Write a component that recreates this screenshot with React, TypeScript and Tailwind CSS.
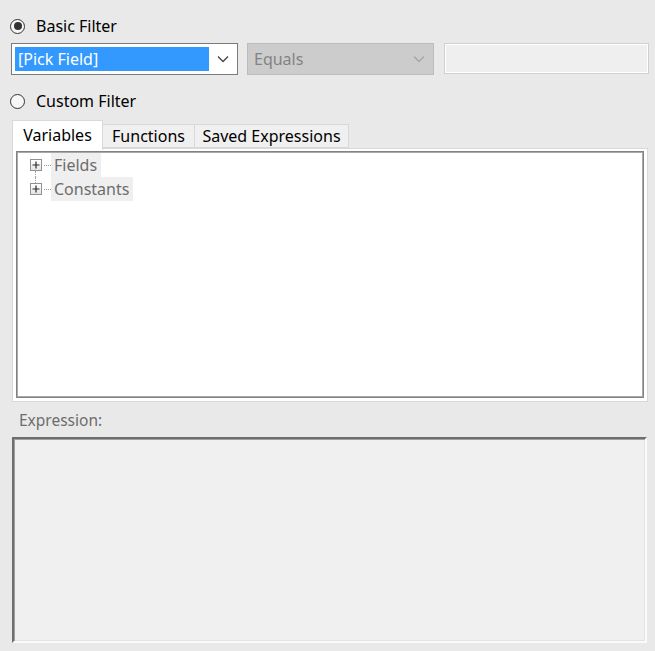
import React from "react";

const font = { fontFamily: '"Noto Sans", "Open Sans", Arial, sans-serif' };

function Radio({ checked, label }: { checked?: boolean; label: string }) {
  return (
    <label className="flex items-center gap-[11px] h-[22px]">
      <span className="w-[15px] h-[15px] rounded-full border-[1.5px] border-[#333333] bg-[#f7f7f7] flex items-center justify-center">
        {checked && <span className="w-[8px] h-[8px] rounded-full bg-[#333333]" />}
      </span>
      <span className="text-[16px] text-black leading-none">{label}</span>
    </label>
  );
}

function Chevron({ color }: { color: string }) {
  return (
    <svg width="12" height="8" viewBox="0 0 12 8" fill="none">
      <path d="M1 1.5 L6 6.5 L11 1.5" stroke={color} strokeWidth="1.3" />
    </svg>
  );
}

function PlusBox() {
  return (
    <span className="w-[12px] h-[12px] border border-[#919191] bg-gradient-to-b from-white to-[#e4e4e4] flex items-center justify-center">
      <svg width="8" height="8" viewBox="0 0 8 8">
        <path d="M0.5 4 H7.5 M4 0.5 V7.5" stroke="#2a2a2a" strokeWidth="1.2" />
      </svg>
    </span>
  );
}

function TreeRow({ label, first }: { label: string; first?: boolean }) {
  return (
    <div className="flex items-center h-[24px]">
      <div className="relative w-[14px] h-[24px] flex items-center justify-center">
        <span
          className={
            first
              ? "absolute left-[6px] top-[18px] bottom-0 border-l border-dotted border-[#a0a0a0]"
              : "absolute left-[6px] top-0 h-[6px] border-l border-dotted border-[#a0a0a0]"
          }
        />
        <PlusBox />
      </div>
      <span className="w-[7px] border-t border-dotted border-[#a0a0a0] ml-[1px]" />
      <span className="h-[24px] flex items-center bg-[#efefef] pl-[3px] pr-[4px] text-[16px] text-[#6d6d6d]">
        {label}
      </span>
    </div>
  );
}

export default function App() {
  return (
    <div className="w-[655px] h-[651px] bg-[#e9e9e9] overflow-hidden" style={font}>
      <div className="pl-[10px] pt-[15px]">
        <Radio checked label="Basic Filter" />

        <div className="flex mt-[6px] ml-[1px] h-[32px] gap-[9px]">
          <div className="w-[227px] h-[32px] border border-[#7a7a7a] bg-white flex items-center pl-[3px] pr-[8px]">
            <div className="w-[194px] h-[24px] bg-[#3399ff] text-white text-[16px] flex items-center pl-[3px]">
              [Pick Field]
            </div>
            <div className="flex-1 flex justify-end">
              <Chevron color="#444444" />
            </div>
          </div>
          <div className="w-[187px] h-[32px] border border-[#bcbcbc] bg-[#cccccc] flex items-center justify-between pl-[6px] pr-[8px]">
            <span className="text-[16px] text-[#838383]">Equals</span>
            <Chevron color="#a6a6a6" />
          </div>
          <div className="ml-[1px] w-[205px] h-[31px] border border-[#d0d0d0] bg-[#efefef] shadow-[inset_0_0_0_1px_#ffffff]" />
        </div>

        <div className="mt-[15px]">
          <Radio label="Custom Filter" />
        </div>
      </div>

      <div className="ml-[12px] mt-[6px] w-[636px]">
        <div className="flex items-end h-[30px]">
          <div className="h-[30px] w-[91px] bg-white border border-b-0 border-[#d9d9d9] flex items-center justify-center text-[16px] text-black relative z-10 mb-[-2px] pb-[2px]">
            Variables
          </div>
          <div className="h-[24px] w-[92px] bg-[#f0f0f0] border border-l-0 border-[#d9d9d9] flex items-center justify-center text-[16px] text-black">
            Functions
          </div>
          <div className="h-[24px] w-[154px] bg-[#f0f0f0] border border-l-0 border-[#d9d9d9] flex items-center justify-center text-[16px] text-black">
            Saved Expressions
          </div>
        </div>
        <div className="h-[254px] bg-white border border-[#d9d9d9] pt-[2px] px-[3px] pb-[3px]">
          <div className="h-full border border-[#828282] shadow-[inset_0_0_0_1px_#a8a8a8] bg-white pl-[12px] pt-[1px]">
            <TreeRow first label="Fields" />
            <TreeRow label="Constants" />
          </div>
        </div>
      </div>

      <div className="pl-[19px] mt-[6px] h-[26px] flex items-center text-[15.5px] text-[#6d6d6d]">
        Expression:
      </div>
      <div className="ml-[12px] mt-[3px] w-[635px] h-[206px] bg-[#f0f0f0] border-2 border-t-[#6e6e6e] border-l-[#6e6e6e] border-r-[#fbfbfb] border-b-[#fbfbfb] shadow-[inset_1px_1px_0_#a0a0a0,inset_-1px_-1px_0_#e3e3e3]" />
    </div>
  );
}
